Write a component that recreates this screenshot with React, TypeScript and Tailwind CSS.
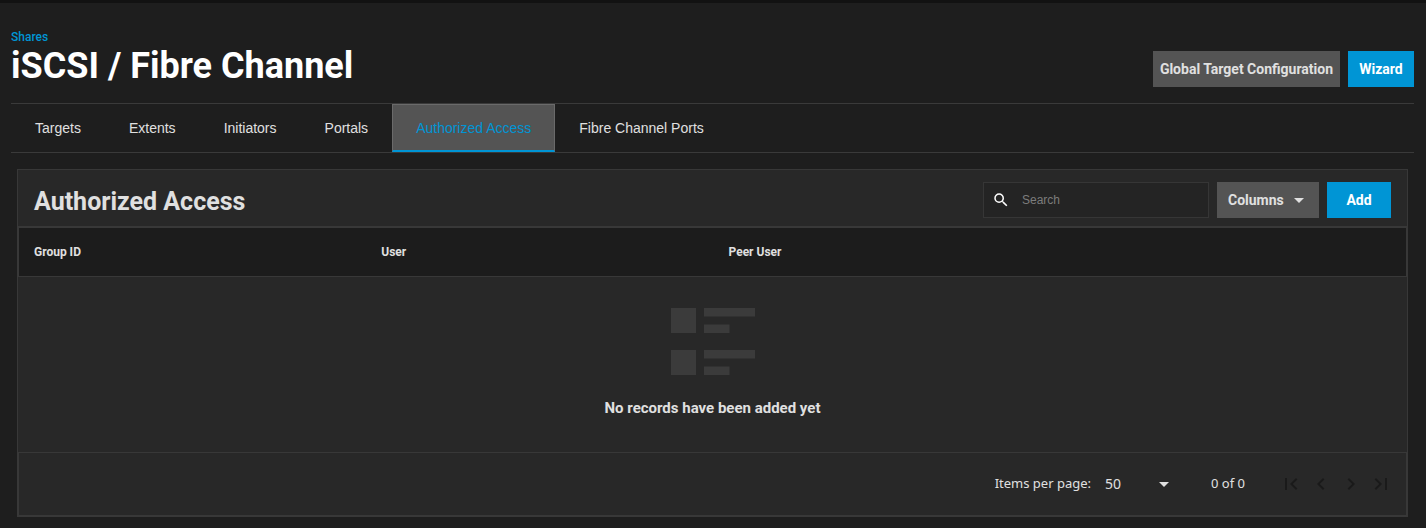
import { useState } from 'react';

const tabs = ['Targets', 'Extents', 'Initiators', 'Portals', 'Authorized Access', 'Fibre Channel Ports'];
const columns = ['Group ID', 'User', 'Peer User'];

const pagerIcons = [
  { label: 'First page', d: 'M18.41 16.59L13.82 12l4.59-4.59L17 6l-6 6 6 6zM6 6h2v12H6z' },
  { label: 'Previous page', d: 'M15.41 7.41L14 6l-6 6 6 6 1.41-1.41L10.83 12z' },
  { label: 'Next page', d: 'M10 6L8.59 7.41 13.17 12l-4.58 4.59L10 18l6-6z' },
  { label: 'Last page', d: 'M5.59 7.41L10.18 12l-4.59 4.59L7 18l6-6-6-6zM16 6h2v12h-2z' },
];

function Caret() {
  return (
    <svg viewBox="0 0 10 5" className="h-[5px] w-[10px] fill-current" aria-hidden="true">
      <path d="M0 0h10L5 5z" />
    </svg>
  );
}

function EmptyListIcon() {
  return (
    <svg viewBox="0 0 84 67" className="h-[67px] w-[84px] fill-[#3b3b3b]" aria-hidden="true">
      <path d="M0 0h25v25H0zM33 0h51v8.500H33zM33 16.500h25.500V25H33zM0 42h25v25H0zM33 42h51v8.500H33zM33 58.500h25.500V67H33z" />
    </svg>
  );
}

export default function App() {
  const [active, setActive] = useState('Authorized Access');
  const [query, setQuery] = useState('');

  return (
    <div className="min-h-screen border-t-3 border-[#121212] bg-[#1e1e1e] pr-3 pb-[11px] pl-[11px] font-['Liberation_Sans',sans-serif] text-[#e0e0e0]">
      <header className="flex items-end justify-between border-b border-[#3a3a3a] pt-[26px] pb-4">
        <div>
          <a href="#shares" className="block font-[Roboto,sans-serif] text-xs leading-4 font-medium text-[#0095d5]">
            Shares
          </a>
          <h1 className="font-[Roboto,sans-serif] text-[36px] leading-[42px] font-bold text-white">
            iSCSI / Fibre Channel
          </h1>
        </div>
        <div className="flex gap-2 font-[Roboto,sans-serif] text-sm font-bold">
          <button type="button" className="h-9 bg-[#545454] px-[7px] text-[#e0e0e0]">
            Global Target Configuration
          </button>
          <button type="button" className="h-9 w-[66px] bg-[#0095d5] text-white">
            Wizard
          </button>
        </div>
      </header>

      <nav className="flex border-b border-[#3a3a3a] text-sm">
        {tabs.map((tab) => (
          <button
            key={tab}
            type="button"
            onClick={() => setActive(tab)}
            className={
              tab === active
                ? 'h-12 border border-b-2 border-[#6a6a6a] border-b-[#0095d5] bg-[#545454] px-[23px] text-[#0095d5]'
                : 'h-12 px-6'
            }
          >
            {tab}
          </button>
        ))}
      </nav>

      <main className="mx-1.5 mt-4 border border-[#383838] bg-[#282828]">
        <div className="flex items-center justify-between px-4 pt-3 pb-2">
          <h2 className="pt-1 font-[Roboto,sans-serif] text-[25px] leading-8 font-bold">Authorized Access</h2>
          <div className="flex gap-2 font-[Roboto,sans-serif] text-sm font-bold">
            <label className="flex h-9 w-[226px] items-center gap-3 border border-[#363636] bg-[#242424] pl-2 font-['Liberation_Sans',sans-serif] text-xs font-normal">
              <svg viewBox="0 0 24 24" className="h-[18px] w-[18px] fill-white" aria-hidden="true">
                <path d="M15.500 14h-.79l-.28-.27A6.471 6.471 0 0 0 16 9.500 6.500 6.500 0 1 0 9.500 16c1.610 0 3.090-.590 4.230-1.570l.27.28v.79l5 4.990L20.490 19l-4.990-5zm-6 0C7.010 14 5 11.990 5 9.500S7.010 5 9.500 5 14 7.010 14 9.500 11.990 14 9.500 14z" />
              </svg>
              <input
                aria-label="Search"
                placeholder="Search"
                value={query}
                onChange={(e) => setQuery(e.target.value)}
                className="min-w-0 flex-1 bg-transparent outline-none placeholder:text-[#7c7c7c]"
              />
            </label>
            <button type="button" className="flex h-9 w-[102px] items-center justify-between bg-[#545454] pr-[15px] pl-[11px]">
              Columns
              <Caret />
            </button>
            <button type="button" className="h-9 w-16 bg-[#0095d5] text-white">
              Add
            </button>
          </div>
        </div>

        <table className="w-full table-fixed border-separate border-spacing-0 font-[Roboto,sans-serif]">
          <thead>
            <tr className="h-[51px] bg-[#1c1c1c] text-left text-xs">
              {columns.map((name) => (
                <th
                  key={name}
                  className="border-t-2 border-b border-[#383838] px-4 font-bold first:border-l first:pl-[15px]"
                >
                  {name}
                </th>
              ))}
              <td className="border-t-2 border-r border-b border-[#383838]" />
            </tr>
          </thead>
          <tbody>
            <tr>
              <td colSpan={4} className="pt-[31px] pb-8">
                <div className="flex flex-col items-center gap-[21px]">
                  <EmptyListIcon />
                  <p className="text-[15px] leading-6 font-bold">No records have been added yet</p>
                </div>
              </td>
            </tr>
          </tbody>
        </table>

        <footer className="flex h-16 items-center justify-end border border-[#383838] pr-2.5 font-['Noto_Sans',sans-serif] text-[13px]">
          <label htmlFor="page-size">Items per page:</label>
          <div className="relative ml-[14px] flex items-center">
            <select id="page-size" defaultValue="50" className="w-16 appearance-none bg-transparent text-sm outline-none">
              <option value="10">10</option>
              <option value="50">50</option>
              <option value="100">100</option>
            </select>
            <span className="pointer-events-none absolute right-0">
              <Caret />
            </span>
          </div>
          <span className="mr-[31px] ml-[42px]">0 of 0</span>
          <div className="flex">
            {pagerIcons.map(({ label, d }) => (
              <button key={label} type="button" disabled aria-label={label} className="flex w-[30px] justify-center">
                <svg viewBox="0 0 24 24" className="h-6 w-6 fill-[#1a1a1a]" aria-hidden="true">
                  <path d={d} />
                </svg>
              </button>
            ))}
          </div>
        </footer>
      </main>
    </div>
  );
}
